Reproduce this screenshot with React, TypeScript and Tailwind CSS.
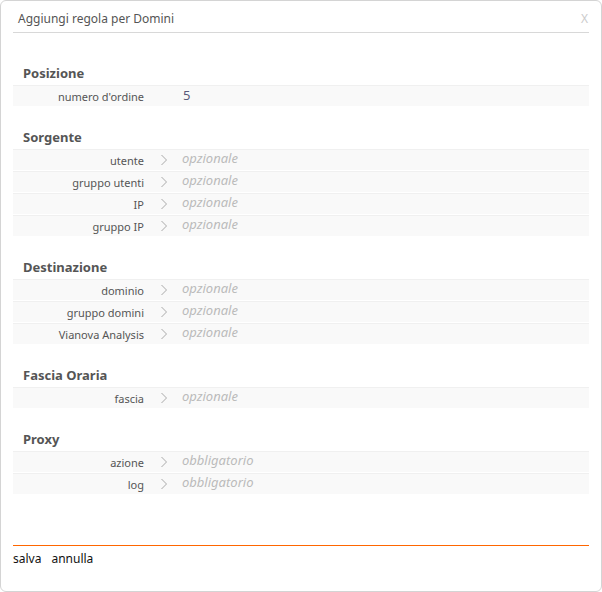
const sections: { title: string; rows: { label: string; value: string; plain?: boolean }[] }[] = [
  { title: "Posizione", rows: [{ label: "numero d'ordine", value: "5", plain: true }] },
  {
    title: "Sorgente",
    rows: [
      { label: "utente", value: "opzionale" },
      { label: "gruppo utenti", value: "opzionale" },
      { label: "IP", value: "opzionale" },
      { label: "gruppo IP", value: "opzionale" },
    ],
  },
  {
    title: "Destinazione",
    rows: [
      { label: "dominio", value: "opzionale" },
      { label: "gruppo domini", value: "opzionale" },
      { label: "Vianova Analysis", value: "opzionale" },
    ],
  },
  { title: "Fascia Oraria", rows: [{ label: "fascia", value: "opzionale" }] },
  {
    title: "Proxy",
    rows: [
      { label: "azione", value: "obbligatorio" },
      { label: "log", value: "obbligatorio" },
    ],
  },
];

function Chevron() {
  return (
    <svg width="8" height="12" viewBox="0 0 8 12">
      <path d="M1.5 1 L6.5 6 L1.5 11" fill="none" stroke="#aaa" strokeWidth="1" />
    </svg>
  );
}

export default function App() {
  return (
    <div className="w-[602px] h-[592px] bg-white font-['Liberation_Sans']">
      <div className="h-full border border-[#d4d4d4] rounded-[6px] px-[12px] flex flex-col">
        <div className="flex justify-between items-center h-[32px] border-b border-[#d8d8d8] pt-[4px]">
          <span className="text-[12px] text-[#555] pl-[5px]">Aggiungi regola per Domini</span>
          <span className="text-[12px] text-[#ccc] pr-[1px]">X</span>
        </div>
        <div className="pt-[29px] flex flex-col">
          {sections.map((s, i) => (
            <div key={s.title} className={i > 0 ? "mt-[19px]" : ""}>
              <div className="h-[23px] pl-[10px] text-[13px] font-bold text-[#555] leading-[23px]">{s.title}</div>
              {s.rows.map((r) => (
                <div key={r.label} className="flex items-center h-[22px] bg-[#f9f9f9] border-t border-[#f0f0f0] border-b border-b-white">
                  <span className="w-[131px] text-right text-[11px] text-[#555] mt-[2px]">{r.label}</span>
                  {r.plain ? (
                    <span className="ml-[39px] text-[13px] text-[#5a5a7a]">{r.value}</span>
                  ) : (
                    <>
                      <span className="ml-[16px] w-[8px] flex"><Chevron /></span>
                      <span className="ml-[14px] text-[13px] italic text-[#bbb] -mt-[3px]">{r.value}</span>
                    </>
                  )}
                </div>
              ))}
            </div>
          ))}
        </div>
        <div className="flex-1" />
        <div className="border-t border-t-[#ff6600] mb-[23px] pt-[4px] flex gap-[10px] text-[12px] text-[#111]">
          <span>salva</span>
          <span>annulla</span>
        </div>
      </div>
    </div>
  );
}
